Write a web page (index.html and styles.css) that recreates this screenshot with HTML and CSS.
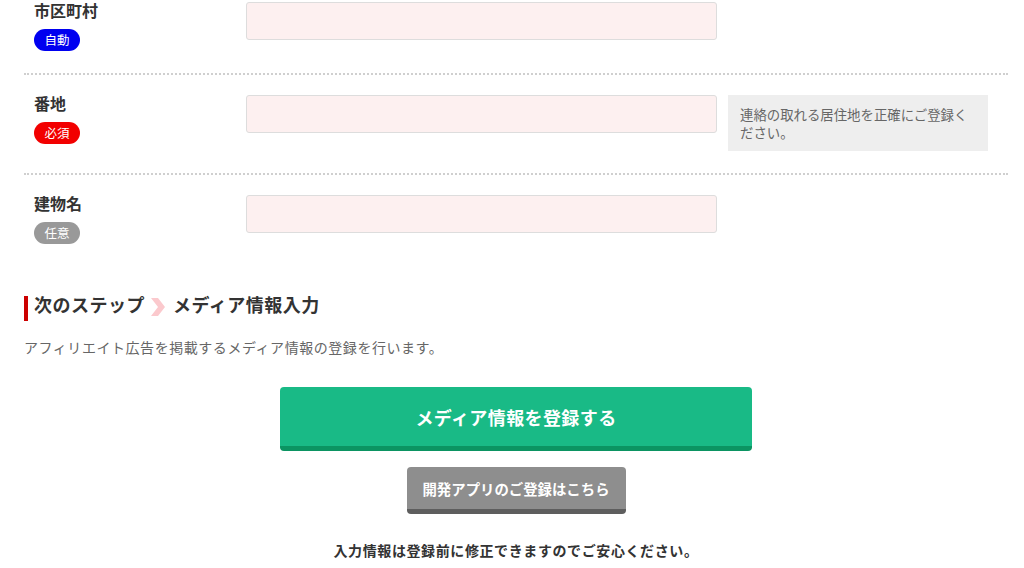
FILE: index.html
```html
<!DOCTYPE html>
<html lang="ja">
<head>
<meta charset="utf-8">
<title>メディア登録</title>
<link rel="stylesheet" href="styles.css">
</head>
<body>
<div class="page">
  <div class="form-row">
    <div class="label-col">
      <div class="label">市区町村</div>
      <span class="badge badge-auto">自動</span>
    </div>
    <div class="field"><input class="text-input" type="text"></div>
  </div>
  <div class="form-row">
    <div class="label-col">
      <div class="label">番地</div>
      <span class="badge badge-req">必須</span>
    </div>
    <div class="field"><input class="text-input" type="text"></div>
    <div class="hint">連絡の取れる居住地を正確にご登録ください。</div>
  </div>
  <div class="form-row last">
    <div class="label-col">
      <div class="label">建物名</div>
      <span class="badge badge-opt">任意</span>
    </div>
    <div class="field"><input class="text-input" type="text"></div>
  </div>

  <h2 class="step-title">次のステップ<svg class="chev" width="14" height="18" viewBox="0 0 14 18"><polygon points="0,0 7,0 14,9 7,18 0,18 7,9" fill="#fbc9cd"/></svg>メディア情報入力</h2>
  <p class="desc">アフィリエイト広告を掲載するメディア情報の登録を行います。</p>

  <div class="actions">
    <button class="btn-main" type="button">メディア情報を登録する</button>
    <button class="btn-sub" type="button">開発アプリのご登録はこちら</button>
    <p class="note">入力情報は登録前に修正できますのでご安心ください。</p>
  </div>
</div>
</body>
</html>
```

FILE: styles.css
```css
html, body {
  margin: 0;
  padding: 0;
  background: #ffffff;
}
body {
  font-family: "Noto Sans CJK JP", "Noto Sans", sans-serif;
  color: #333333;
  overflow: hidden;
}
.page {
  width: 984px;
  margin: -18px 0 0 24px;
}
.form-row {
  display: flex;
  align-items: flex-start;
  padding: 20px 0 22px;
  border-bottom: 2px dotted #cfcfcf;
}
.form-row.last {
  border-bottom: none;
}
.label-col {
  width: 212px;
  padding-left: 10px;
  height: 49px;
}
.label {
  font-size: 16px;
  line-height: 14px;
  font-weight: 700;
  color: #333333;
  padding-top: 1px;
}
.badge {
  display: inline-block;
  margin-top: 12px;
  width: 46px;
  height: 22px;
  line-height: 22px;
  border-radius: 11px;
  text-align: center;
  font-size: 12.5px;
  color: #ffffff;
  vertical-align: top;
}
.badge-auto { background: #0000f0; }
.badge-req { background: #f20000; }
.badge-opt { background: #999999; }
.field {
  width: 471px;
}
.text-input {
  display: block;
  box-sizing: border-box;
  width: 471px;
  height: 38px;
  margin: 0;
  border: 1px solid #dddddd;
  border-radius: 3px;
  background: #fdf0f0;
  outline: none;
}
.hint {
  box-sizing: border-box;
  width: 260px;
  margin-left: 11px;
  padding: 10px 14px 10px 12px;
  background: #eeeeee;
  color: #666666;
  font-size: 13.4px;
  line-height: 18px;
}
.step-title {
  display: flex;
  align-items: flex-start;
  margin: 30px 0 0;
  height: 25px;
  border-left: 4px solid #cc0000;
  padding-left: 6px;
  font-size: 18px;
  line-height: 17px;
  letter-spacing: 0.5px;
  font-weight: 700;
  color: #333333;
}
.chev {
  margin: 2px 8px 0 6px;
}
.desc {
  margin: 16px 0 0;
  font-size: 14px;
  line-height: 20px;
  letter-spacing: 0.55px;
  color: #666666;
}
.actions {
  display: flex;
  flex-direction: column;
  align-items: center;
  margin-top: 30px;
}
.btn-main {
  box-sizing: border-box;
  width: 472px;
  height: 64px;
  border: none;
  border-bottom: 5px solid #0b9462;
  border-radius: 4px;
  background: #19ba86;
  color: #ffffff;
  font-family: inherit;
  font-size: 18px;
  letter-spacing: 0.4px;
  font-weight: 700;
  padding: 0;
}
.btn-sub {
  box-sizing: border-box;
  width: 219px;
  height: 47px;
  margin-top: 16px;
  border: none;
  border-bottom: 5px solid #5e5e5e;
  border-radius: 4px;
  background: #8e8e8e;
  color: #ffffff;
  font-family: inherit;
  font-size: 14.4px;
  font-weight: 700;
  padding: 0;
}
.note {
  margin: 26px 0 0;
  font-size: 14px;
  line-height: 20px;
  letter-spacing: 0.6px;
  font-weight: 700;
  color: #333333;
}
```
